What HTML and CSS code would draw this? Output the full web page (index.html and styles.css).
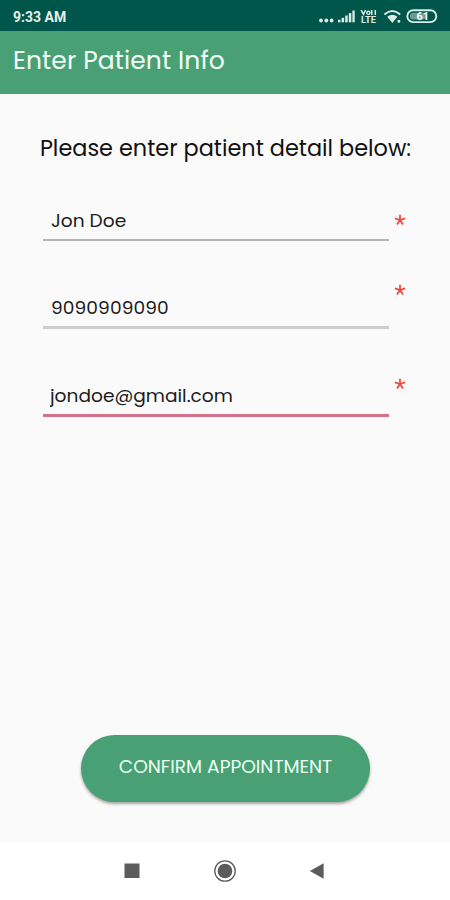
FILE: index.html
```html
<!doctype html>
<html lang="en">
<head>
  <meta charset="utf-8">
  <title>Enter Patient Info</title>
  <link rel="stylesheet" href="styles.css">
</head>
<body>
  <div class="statusbar">
    <span class="time">9:33 AM</span>
    <svg class="status-icons" width="122" height="20" viewBox="0 0 122 20">
      <g fill="#dcece8">
        <circle cx="3" cy="13.5" r="1.9"/>
        <circle cx="8.3" cy="13.5" r="1.9"/>
        <circle cx="13.6" cy="13.5" r="1.9"/>
        <rect x="20" y="12.8" width="2.5" height="2.5"/>
        <rect x="23.6" y="10.8" width="2.5" height="4.5"/>
        <rect x="27.2" y="8.5" width="2.5" height="6.8"/>
        <rect x="30.8" y="6.1" width="2.5" height="9.2"/>
        <rect x="34.4" y="3.5" width="2.3" height="11.8"/>
        <path d="M43.2 3l2.2 4.4L47.6 3M53.8 3v5M57.3 3v5" fill="none" stroke="#dcece8" stroke-width="1.5"/>
        <circle cx="50.4" cy="5.8" r="1.6" fill="none" stroke="#dcece8" stroke-width="1.4"/>
        <text class="lte" x="43" y="15.8" textLength="15" lengthAdjust="spacingAndGlyphs">LTE</text>
        <path d="M69.2 9.8Q74.3 5.8 79.4 9.8L74.3 16z"/>
        <rect x="79.6" y="13" width="2.6" height="2.6"/>
      </g>
      <g fill="none" stroke="#dcece8">
        <path d="M66.4 7.4Q74.3 0.8 82.2 7.4" stroke-width="1.9"/>
        <rect x="89.3" y="3.3" width="29" height="11.8" rx="5.9" stroke-width="1.9"/>
      </g>
      <rect x="92" y="5.8" width="16" height="6.8" rx="3" fill="#6c9c94"/>
      <text class="battery" x="98.5" y="13">61</text>
    </svg>
  </div>

  <header class="appbar">Enter Patient Info</header>

  <main class="content">
    <h1 class="heading">Please enter patient detail below:</h1>

    <form class="patient-form">
      <div class="row row-name">
        <input class="field" type="text" value="Jon Doe">
        <span class="required"><svg width="12" height="12" viewBox="0 0 12 12"><path d="M6 6V.8M6 6L.9 4.4M6 6l5.1-1.6M6 6l-3 4.6M6 6l3 4.6"/></svg></span>
      </div>
      <div class="row row-phone">
        <input class="field" type="text" value="9090909090">
        <span class="required"><svg width="12" height="12" viewBox="0 0 12 12"><path d="M6 6V.8M6 6L.9 4.4M6 6l5.1-1.6M6 6l-3 4.6M6 6l3 4.6"/></svg></span>
      </div>
      <div class="row row-email">
        <input class="field" type="text" value="jondoe@gmail.com">
        <span class="required"><svg width="12" height="12" viewBox="0 0 12 12"><path d="M6 6V.8M6 6L.9 4.4M6 6l5.1-1.6M6 6l-3 4.6M6 6l3 4.6"/></svg></span>
      </div>
    </form>

    <button class="confirm" type="button">CONFIRM APPOINTMENT</button>
  </main>

  <nav class="navbar">
    <svg width="24" height="24" viewBox="0 0 24 24"><rect x="4.5" y="4.5" width="15" height="14.5" fill="#5c5c5c"/></svg>
    <svg width="24" height="24" viewBox="0 0 24 24">
      <circle cx="12" cy="12" r="10.2" fill="none" stroke="#5c5c5c" stroke-width="1.3"/>
      <circle cx="12" cy="12" r="7.3" fill="#5c5c5c"/>
    </svg>
    <svg width="24" height="24" viewBox="0 0 24 24"><path d="M3.8 12L17.6 4.2v15.6z" fill="#5c5c5c"/></svg>
  </nav>
</body>
</html>
```
FILE: styles.css
```css
* {
  box-sizing: border-box;
}
body {
  margin: 0;
  height: 900px;
  display: flex;
  flex-direction: column;
  overflow: hidden;
  background: #fafafa;
  color: #111;
  font-family: Poppins, Inter, sans-serif;
}

.statusbar {
  height: 31px;
  padding: 2px 10px 0 13px;
  display: flex;
  align-items: center;
  justify-content: space-between;
  background: #00564a;
  color: #e4f1ee;
}
.time {
  font-family: Roboto, sans-serif;
  font-size: 14px;
  font-weight: 700;
}
.lte {
  font: 700 9px Roboto, sans-serif;
}
.battery {
  font: 700 11px Roboto, sans-serif;
  fill: #fff;
}

.appbar {
  height: 63px;
  padding: 15px 13px 0;
  background: #48a074;
  color: #f2fff6;
  font-size: 25px;
  line-height: 30px;
  letter-spacing: 0.12px;
  white-space: nowrap;
}

.content {
  flex: 1;
  display: flex;
  flex-direction: column;
  align-items: center;
}
.heading {
  margin: 39px 0 0;
  padding-left: 1px;
  font-size: 22.4px;
  font-weight: 400;
  line-height: 30px;
  white-space: nowrap;
}

.patient-form {
  width: 364px;
  margin-top: 35px;
}
.row {
  display: flex;
  gap: 5px;
}
.row-name {
  height: 43px;
}
.row-phone {
  height: 88px;
  padding-top: 43px;
}
.row-email {
  height: 88px;
  padding-top: 43px;
}
.field {
  width: 346px;
  height: 100%;
  padding: 3px 8px 0;
  border: none;
  border-bottom: 2px solid #b5b5b5;
  outline: none;
  background: none;
  color: #1c1c1c;
  font-family: inherit;
  font-size: 18.6px;
}
.row-phone .field {
  padding-top: 5px;
  border-bottom: 3px solid #cdcdcd;
  letter-spacing: 0.08px;
}
.row-email .field {
  padding-top: 5px;
  padding-left: 7px;
  border-bottom: 3px solid #d66f8a;
}
.required {
  width: 12px;
  margin-top: 16px;
}
.row-phone .required {
  margin-top: 0;
}
.row-email .required {
  margin-top: 6px;
}
.required svg {
  display: block;
  fill: none;
  stroke: #f0483f;
  stroke-width: 1.8;
}

.confirm {
  width: 289px;
  height: 67px;
  margin: auto 0 40px;
  padding: 0 0 4px 1px;
  border: none;
  border-radius: 34px;
  background: #48a074;
  box-shadow: 0 2px 3px rgba(0, 0, 0, 0.35);
  color: #ecfff3;
  font-family: inherit;
  font-size: 18.6px;
  white-space: nowrap;
}

.navbar {
  height: 58px;
  padding: 0 120px;
  display: flex;
  align-items: center;
  justify-content: space-between;
  background: #fff;
}
```
